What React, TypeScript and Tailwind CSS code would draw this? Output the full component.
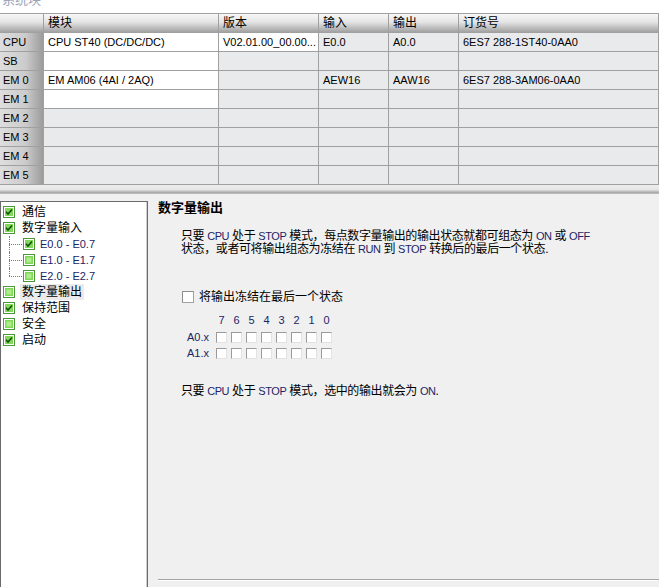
import type { ReactNode } from 'react'

const rows = [
  { h: 'CPU', cells: ['CPU ST40 (DC/DC/DC)', 'V02.01.00_00.00...', 'E0.0', 'A0.0', '6ES7 288-1ST40-0AA0'], white: 2 },
  { h: 'SB', cells: ['', '', '', '', ''], white: 1 },
  { h: 'EM 0', cells: ['EM AM06 (4AI / 2AQ)', '', 'AEW16', 'AAW16', '6ES7 288-3AM06-0AA0'], white: 1 },
  { h: 'EM 1', cells: ['', '', '', '', ''], white: 1 },
  { h: 'EM 2', cells: ['', '', '', '', ''], white: 0 },
  { h: 'EM 3', cells: ['', '', '', '', ''], white: 0 },
  { h: 'EM 4', cells: ['', '', '', '', ''], white: 0 },
  { h: 'EM 5', cells: ['', '', '', '', ''], white: 0 }
]

const headers = ['模块', '版本', '输入', '输出', '订货号']

const tree = [
  { label: '通信', checked: true },
  { label: '数字量输入', checked: true },
  { label: 'E0.0 - E0.7', checked: true, child: true },
  { label: 'E1.0 - E1.7', checked: false, child: true },
  { label: 'E2.0 - E2.7', checked: false, child: true, last: true },
  { label: '数字量输出', checked: false, selected: true },
  { label: '保持范围', checked: true },
  { label: '安全', checked: false },
  { label: '启动', checked: true }
]

const bits = ['7', '6', '5', '4', '3', '2', '1', '0']

function L({ children }: { children: ReactNode }) {
  return <span className="text-[11px] text-[#1c2466]">{children}</span>
}

function TreeCheck({ checked }: { checked: boolean }) {
  return (
    <svg width="12" height="12" viewBox="0 0 12 12" className="shrink-0">
      <rect x="0.5" y="0.5" width="11" height="11" fill="#ffffff" stroke="#4a9838" />
      <rect x="2" y="2" width="8" height="8" fill="#7fd957" />
      {!checked && <rect x="3.5" y="3.5" width="5" height="5" fill="#aeec8c" />}
      {checked && <path d="M3 5.8l2 2.2 4-4.6" fill="none" stroke="#175010" strokeWidth="1.6" />}
    </svg>
  )
}

function BitBox() {
  return <div className="w-[11px] h-[11px] bg-white border border-t-[#9a9a9a] border-l-[#9a9a9a] border-b-[#e2e2e2] border-r-[#e2e2e2]" />
}

export default function App() {
  return (
    <div className="w-[659px] h-[587px] bg-white flex flex-col overflow-hidden text-black font-['Liberation_Sans','Noto_Sans_CJK_SC',sans-serif]">
      {/* clipped window title */}
      <div className="h-[13px] overflow-hidden pl-[2px]">
        <div className="text-[13px] leading-[13px] mt-[-7px] text-[#9aa4b8]">系统块</div>
      </div>

      {/* module table */}
      <div className="grid grid-cols-[43px_174px_99px_69px_69px_199px] gap-px bg-[#a0a0a0] pt-px pr-px pb-px">
        <div className="h-[18px] bg-[linear-gradient(to_bottom,#f8f8f8,#e4e4e4_45%,#b4b4b4_85%,#a2a2a2)]" />
        {headers.map(h => (
          <div key={h} className="h-[18px] px-[4px] flex items-center text-[12px] bg-[linear-gradient(to_bottom,#f8f8f8,#e4e4e4_45%,#b4b4b4_85%,#a2a2a2)]">
            {h}
          </div>
        ))}
        {rows.map(r => (
          <>
            <div key={r.h} className="h-[18px] px-[3px] flex items-center text-[11px] bg-[linear-gradient(to_right,#dedede,#cbcbcb_60%,#9c9c9c)]">
              {r.h}
            </div>
            {r.cells.map((c, i) => (
              <div
                key={r.h + i}
                className={`h-[18px] px-[4px] flex items-center text-[11px] whitespace-nowrap overflow-hidden ${i < r.white ? 'bg-white' : 'bg-[#e9eaec]'}`}
              >
                {c}
              </div>
            ))}
          </>
        ))}
      </div>

      {/* splitter */}
      <div className="h-[9px] bg-[linear-gradient(to_bottom,#ededed,#e6e6e6_50%,#a8a8a8_85%,#c4c4c4)]" />

      {/* lower pane */}
      <div className="flex-1 min-h-0 flex bg-[#f0f0f0]">
        <div className="w-[148px] pt-[7px] flex flex-col">
          <div className="flex-1 bg-white border-t border-x border-[#6a6a6a] shadow-[inset_-1px_0_0_#d0d0d0] pt-[2px]">
            {tree.map(t => (
              <div key={t.label} className={`relative h-[16px] flex items-center ${t.child ? 'pl-[22px]' : 'pl-[2px]'}`}>
                {t.child && (
                  <>
                    <div className={`absolute left-[8px] top-0 border-l border-dotted border-[#7a7a7a] ${t.last ? 'h-[8px]' : 'h-[16px]'}`} />
                    <div className="absolute left-[8px] top-[8px] w-[13px] border-t border-dotted border-[#7a7a7a]" />
                  </>
                )}
                <TreeCheck checked={t.checked} />
                {t.child ? (
                  <span className="ml-[5px] text-[11px] text-[#1c2466]">{t.label}</span>
                ) : (
                  <span className={`ml-[5px] px-[2px] text-[12px] leading-[16px] ${t.selected ? 'bg-[#ebebeb]' : ''}`}>{t.label}</span>
                )}
              </div>
            ))}
          </div>
        </div>

        <div className="flex-1 flex flex-col">
          <div className="mt-[6px] pl-[10px] h-[16px] leading-[16px] text-[13px] font-bold">数字量输出</div>

          <div className="mt-[14px] pl-[33px] text-[12px] leading-[13px] whitespace-nowrap tracking-[-0.4px]">
            <div>只要 <L>CPU</L> 处于 <L>STOP</L> 模式，每点数字量输出的输出状态就都可组态为 <L>ON</L> 或 <L>OFF</L></div>
            <div>状态，或者可将输出组态为冻结在 <L>RUN</L> 到 <L>STOP</L> 转换后的最后一个状态.</div>
          </div>

          <div className="mt-[34px] pl-[34px] h-[14px] flex items-center">
            <div className="w-[12px] h-[12px] bg-white border border-[#a2a2a2] border-t-[#8e8e8e] border-l-[#8e8e8e]" />
            <span className="ml-[5px] text-[12px]">将输出冻结在最后一个状态</span>
          </div>

          <div className="mt-[10px] pl-[33px] flex h-[12px] items-center">
            <div className="w-[35px]" />
            <div className="flex gap-[4px]">
              {bits.map(b => (
                <span key={b} className="w-[11px] text-center text-[11px] leading-[12px] text-[#1c2466]">{b}</span>
              ))}
            </div>
          </div>

          <div className="mt-[3px] pl-[33px]">
            {['A0.x', 'A1.x'].map(a => (
              <div key={a} className="h-[16px] flex items-center">
                <span className="w-[35px] pr-[7px] text-right text-[11px] text-[#1c2466]">{a}</span>
                <div className="flex gap-[4px]">
                  {bits.map(b => <BitBox key={b} />)}
                </div>
              </div>
            ))}
          </div>

          <div className="mt-[24px] pl-[33px] text-[12px] leading-[13px] whitespace-nowrap tracking-[-0.4px]">
            只要 <L>CPU</L> 处于 <L>STOP</L> 模式，选中的输出就会为 <L>ON</L>.
          </div>

          <div className="flex-1" />
          <div className="ml-[10px] h-[2px] border-t border-[#a4a4a4] border-b border-b-white" />
          <div className="h-[6px]" />
        </div>
      </div>
    </div>
  )
}
